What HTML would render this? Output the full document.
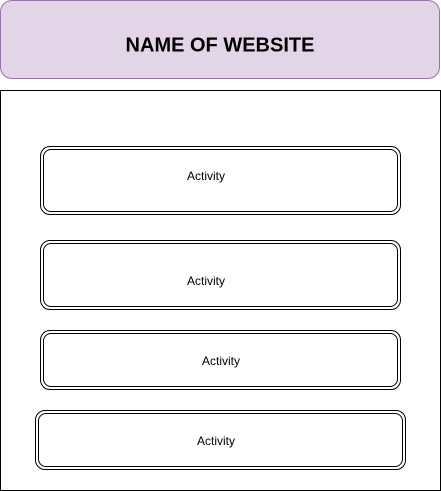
<!DOCTYPE html>
<html><head><style>
body{margin:0;width:441px;height:491px;background:#fff;position:relative;overflow:hidden;font-family:"Liberation Sans",Arial,sans-serif}
.hdr{position:absolute;left:0;top:0;width:438px;height:77px;background:#e1d5e7;border:1px solid #9673a6;border-radius:12px;font-weight:bold;font-size:20px;color:#000}
.hdr span{position:absolute;left:219px;top:45px;transform:translate(-50%,-50%);white-space:nowrap}
.main{position:absolute;left:0;top:90px;width:439px;height:399px;border:1px solid #000}
.b{position:absolute;border:1px solid #000;border-radius:10px;box-sizing:border-box}
.b>div{position:absolute;inset:2px;border:1px solid #000;border-radius:8px}
.t{position:absolute;font-size:12px;color:#000;transform:translate(-50%,-50%);white-space:nowrap}
</style></head><body>
<div class="hdr"><span>NAME OF WEBSITE</span></div>
<div class="main"></div>
<div class="b" style="left:40px;top:146px;width:361px;height:69px"><div></div></div>
<div class="t" style="left:206px;top:176px">Activity</div>
<div class="b" style="left:40px;top:240px;width:361px;height:70px"><div></div></div>
<div class="t" style="left:206px;top:281px">Activity</div>
<div class="b" style="left:40px;top:330px;width:361px;height:60px"><div></div></div>
<div class="t" style="left:221px;top:361px">Activity</div>
<div class="b" style="left:35px;top:410px;width:371px;height:60px"><div></div></div>
<div class="t" style="left:216px;top:441px">Activity</div>
</body></html>
